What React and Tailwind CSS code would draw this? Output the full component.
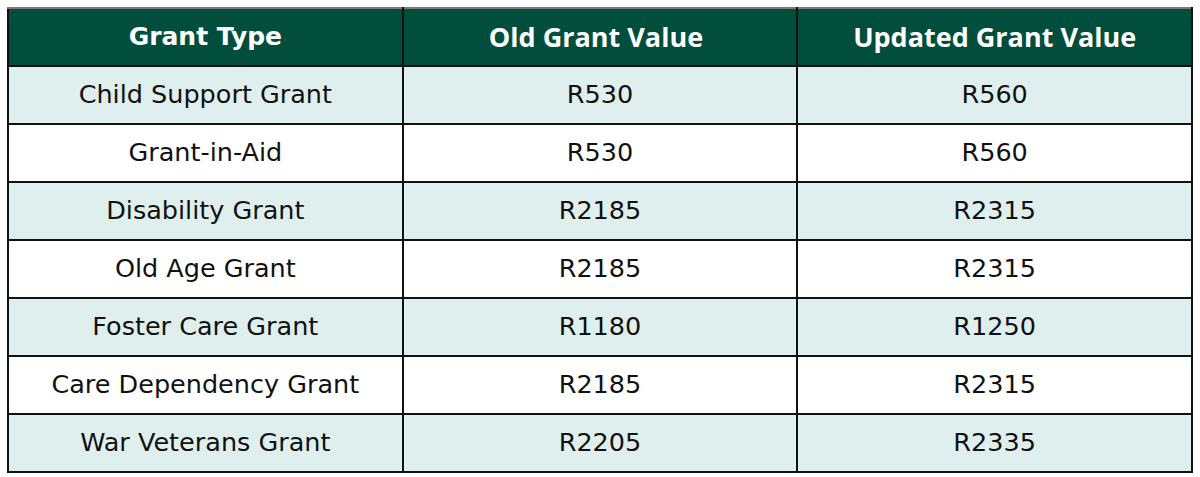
import React from "react";

const rows = [
    ["Child Support Grant", "R530", "R560"],
    ["Grant-in-Aid", "R530", "R560"],
    ["Disability Grant", "R2185", "R2315"],
    ["Old Age Grant", "R2185", "R2315"],
    ["Foster Care Grant", "R1180", "R1250"],
    ["Care Dependency Grant", "R2185", "R2315"],
    ["War Veterans Grant", "R2205", "R2335"],
];

export default function App() {
    const cell = "border-2 border-[#111] h-[58px] p-0 text-center align-middle";
    const head = cell + " border-t-[#7a7a7a]";
    const openSans = { fontFamily: '"Open Sans", sans-serif' };

    return (
        <div className="w-[1200px] h-[477px] bg-white pt-[7px] pl-[7px]" style={{ fontFamily: '"DejaVu Sans", sans-serif' }}>
            <table className="w-[1186px] table-fixed border-collapse text-[25.5px] text-[#111]">
                <thead>
                    <tr className="bg-[#024e3c] text-white font-bold">
                        <th className={head + " text-[25px]"}>Grant Type</th>
                        <th className={head + " text-[27px] pr-2"} style={openSans}>Old Grant Value</th>
                        <th className={head + " text-[27px]"} style={openSans}>Updated Grant Value</th>
                    </tr>
                </thead>
                <tbody>
                    {rows.map((r, i) => (
                        <tr key={r[0]} className={i % 2 === 0 ? "bg-[#dfefed]" : "bg-white"}>
                            {r.map((v, j) => (
                                <td key={j} className={cell + " pb-[2px]"}>{v}</td>
                            ))}
                        </tr>
                    ))}
                </tbody>
            </table>
        </div>
    );
}
